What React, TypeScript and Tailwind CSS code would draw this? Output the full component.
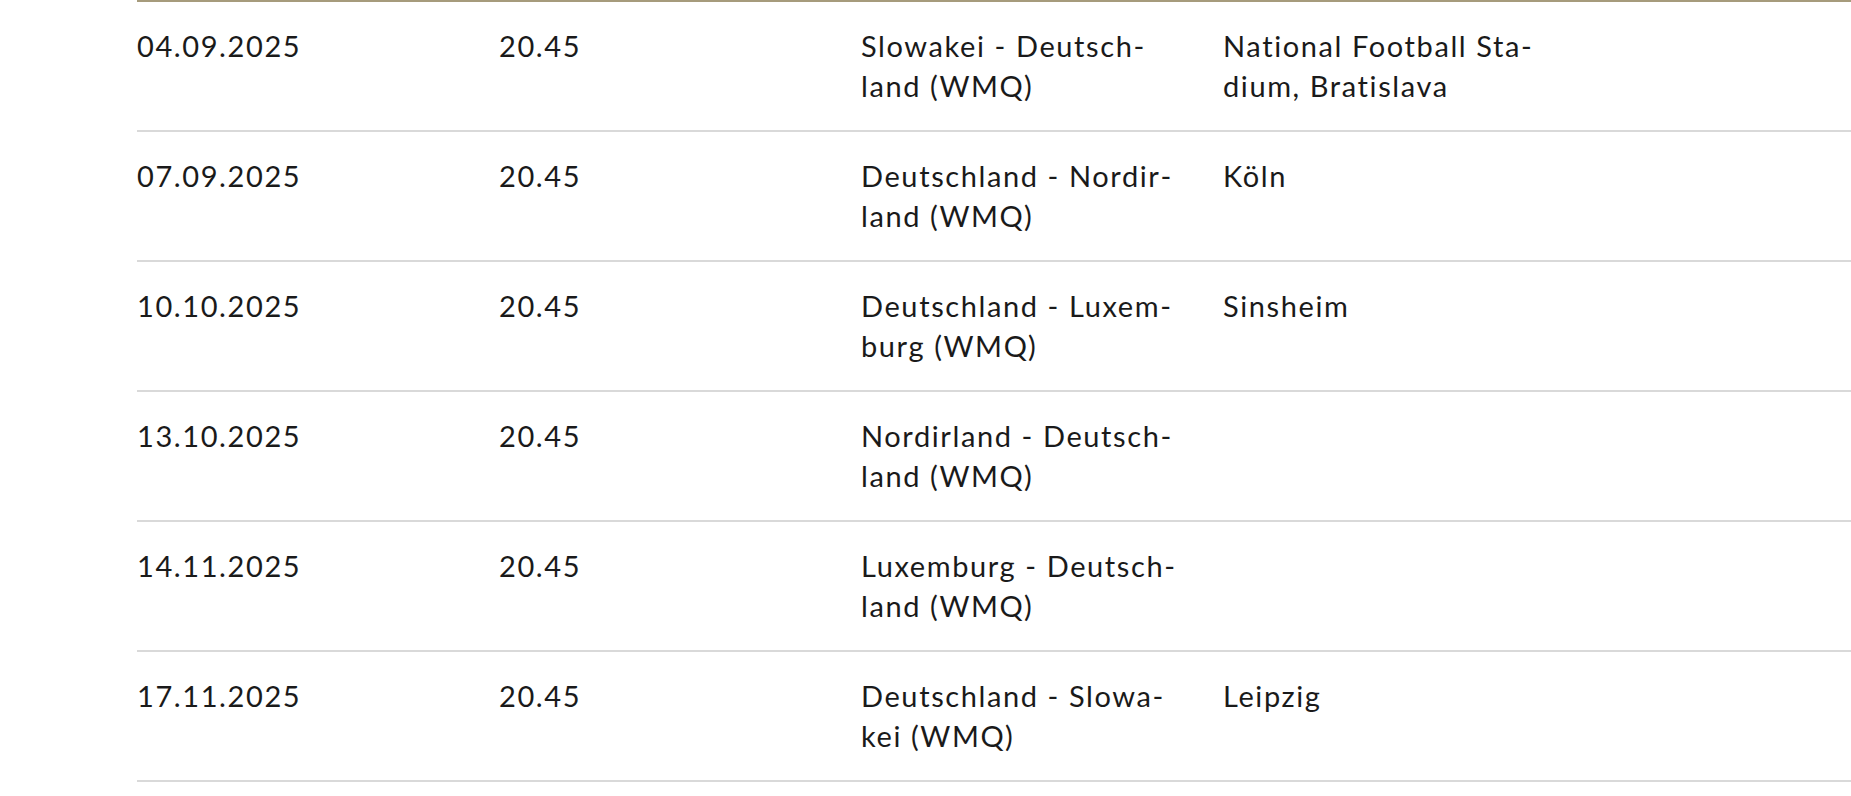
const spiele = [
  { datum: '04.09.2025', zeit: '20.45', spiel: 'Slowakei - Deutsch\u00ADland (WMQ)', ort: 'National Football Sta\u00ADdium, Bratislava' },
  { datum: '07.09.2025', zeit: '20.45', spiel: 'Deutschland - Nordir\u00ADland (WMQ)', ort: 'Köln' },
  { datum: '10.10.2025', zeit: '20.45', spiel: 'Deutschland - Luxem\u00ADburg (WMQ)', ort: 'Sinsheim' },
  { datum: '13.10.2025', zeit: '20.45', spiel: 'Nordirland - Deutsch\u00ADland (WMQ)', ort: '' },
  { datum: '14.11.2025', zeit: '20.45', spiel: 'Luxemburg - Deutsch\u00ADland (WMQ)', ort: '' },
  { datum: '17.11.2025', zeit: '20.45', spiel: 'Deutschland - Slowa\u00ADkei (WMQ)', ort: 'Leipzig' },
];

export default function App() {
  return (
    <div className="min-h-screen bg-white pl-[137px] font-['Lato','Open_Sans',sans-serif] text-[#1a1a1a]">
      <div className="border-t-2 border-[#a69b7c]">
        {spiele.map((s) => (
          <div
            key={s.datum}
            className="grid grid-cols-[362px_362px_362px_362px_1fr] border-b-2 border-[#d9d9d9] pt-[24px] pb-[24px] text-[29px] leading-[40px] tracking-[1.6px]"
          >
            <div className="pr-[40px]">{s.datum}</div>
            <div className="pr-[40px]">{s.zeit}</div>
            <div className="pr-[40px]">{s.spiel}</div>
            <div className="pr-[40px]">{s.ort}</div>
            <div />
          </div>
        ))}
      </div>
    </div>
  );
}
